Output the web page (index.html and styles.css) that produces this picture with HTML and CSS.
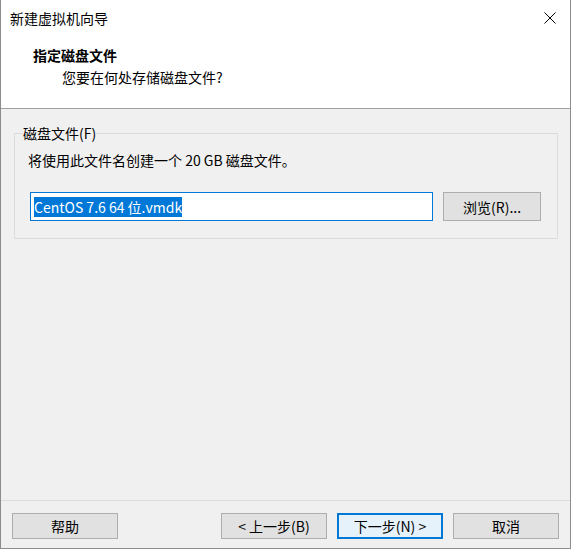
FILE: index.html
```html
<!DOCTYPE html>
<html lang="zh-CN">
<head>
<meta charset="utf-8">
<title>新建虚拟机向导</title>
<link rel="stylesheet" href="styles.css">
</head>
<body>
<div class="window">
  <div class="titlebar">
    <span class="title">新建虚拟机向导</span>
    <svg class="close" width="12" height="12" viewBox="0 0 12 12"><path d="M0.5 0.5 L11.5 11.5 M11.5 0.5 L0.5 11.5" stroke="#000" stroke-width="1" fill="none"/></svg>
  </div>
  <div class="header">
    <div class="heading">指定磁盘文件</div>
    <div class="subheading">您要在何处存储磁盘文件?</div>
  </div>
  <div class="content">
    <fieldset class="group">
      <legend class="legend">磁盘文件(F)</legend>
      <div class="desc">将使用此文件名创建一个 20 GB 磁盘文件。</div>
      <div class="row">
        <div class="textbox"><span class="sel">CentOS 7.6 64 位.vmdk</span></div>
        <div class="btn browse">浏览(R)...</div>
      </div>
    </fieldset>
  </div>
  <div class="footer">
    <div class="btn">帮助</div>
    <div class="spacer"></div>
    <div class="btn">&lt; 上一步(B)</div>
    <div class="btn default">下一步(N) &gt;</div>
    <div class="btn">取消</div>
  </div>
</div>
</body>
</html>
```
FILE: styles.css
```css
html, body {
  margin: 0;
  padding: 0;
  background: #ffffff;
}
body {
  font-family: "Noto Sans CJK SC", "Noto Sans", sans-serif;
  font-size: 14px;
  color: #000;
}
.window {
  width: 571px;
  height: 549px;
  box-sizing: border-box;
  border: 1px solid #8c8c8c;
  border-top: none;
  display: flex;
  flex-direction: column;
  background: #f0f0f0;
}
.titlebar {
  height: 36px;
  flex: none;
  background: #fff;
  display: flex;
  align-items: center;
  justify-content: space-between;
  padding-left: 9px;
  padding-right: 14px;
}
.title {
  line-height: 20px;
}
.close {
  display: block;
}
.header {
  height: 72px;
  flex: none;
  background: #fff;
  border-bottom: 1px solid #a0a0a0;
  padding-left: 32px;
  padding-top: 8px;
  box-sizing: content-box;
}
.header {
  height: 64px;
}
.heading {
  font-weight: bold;
  line-height: 22px;
}
.subheading {
  line-height: 22px;
  padding-left: 29px;
}
.content {
  flex: 1;
  padding: 15px 12px 0 13px;
}
.group {
  margin: 0;
  border: 1px solid #dcdcdc;
  padding: 8px 16px 17px 8px;
  min-width: 0;
}
.legend {
  padding: 0;
  line-height: 18px;
}
.desc {
  margin-left: 5px;
  line-height: 20px;
}
.row {
  margin-top: 22px;
  margin-left: 7px;
  display: flex;
  gap: 10px;
  height: 29px;
}
.textbox {
  width: 404px;
  height: 29px;
  box-sizing: border-box;
  border: 1px solid #0078d7;
  background: #fff;
  padding-left: 3px;
  display: flex;
  align-items: center;
}
.sel {
  background: #0078d7;
  color: #fff;
  line-height: 20px;
}
.btn {
  width: 106px;
  height: 26px;
  box-sizing: border-box;
  border: 1px solid #adadad;
  background: #e1e1e1;
  display: flex;
  align-items: center;
  justify-content: center;
  line-height: 20px;
}
.browse {
  width: 98px;
  height: 29px;
}
.footer {
  height: 47px;
  flex: none;
  box-sizing: content-box;
  border-top: 1px solid #dcdcdc;
  display: flex;
  align-items: flex-start;
  padding: 12px 11px 0 11px;
  box-sizing: border-box;
  height: 48px;
  gap: 10px;
}
.spacer {
  flex: 1;
}
.default {
  border: 2px solid #0078d7;
  background: #e5f1fb;
}
```
